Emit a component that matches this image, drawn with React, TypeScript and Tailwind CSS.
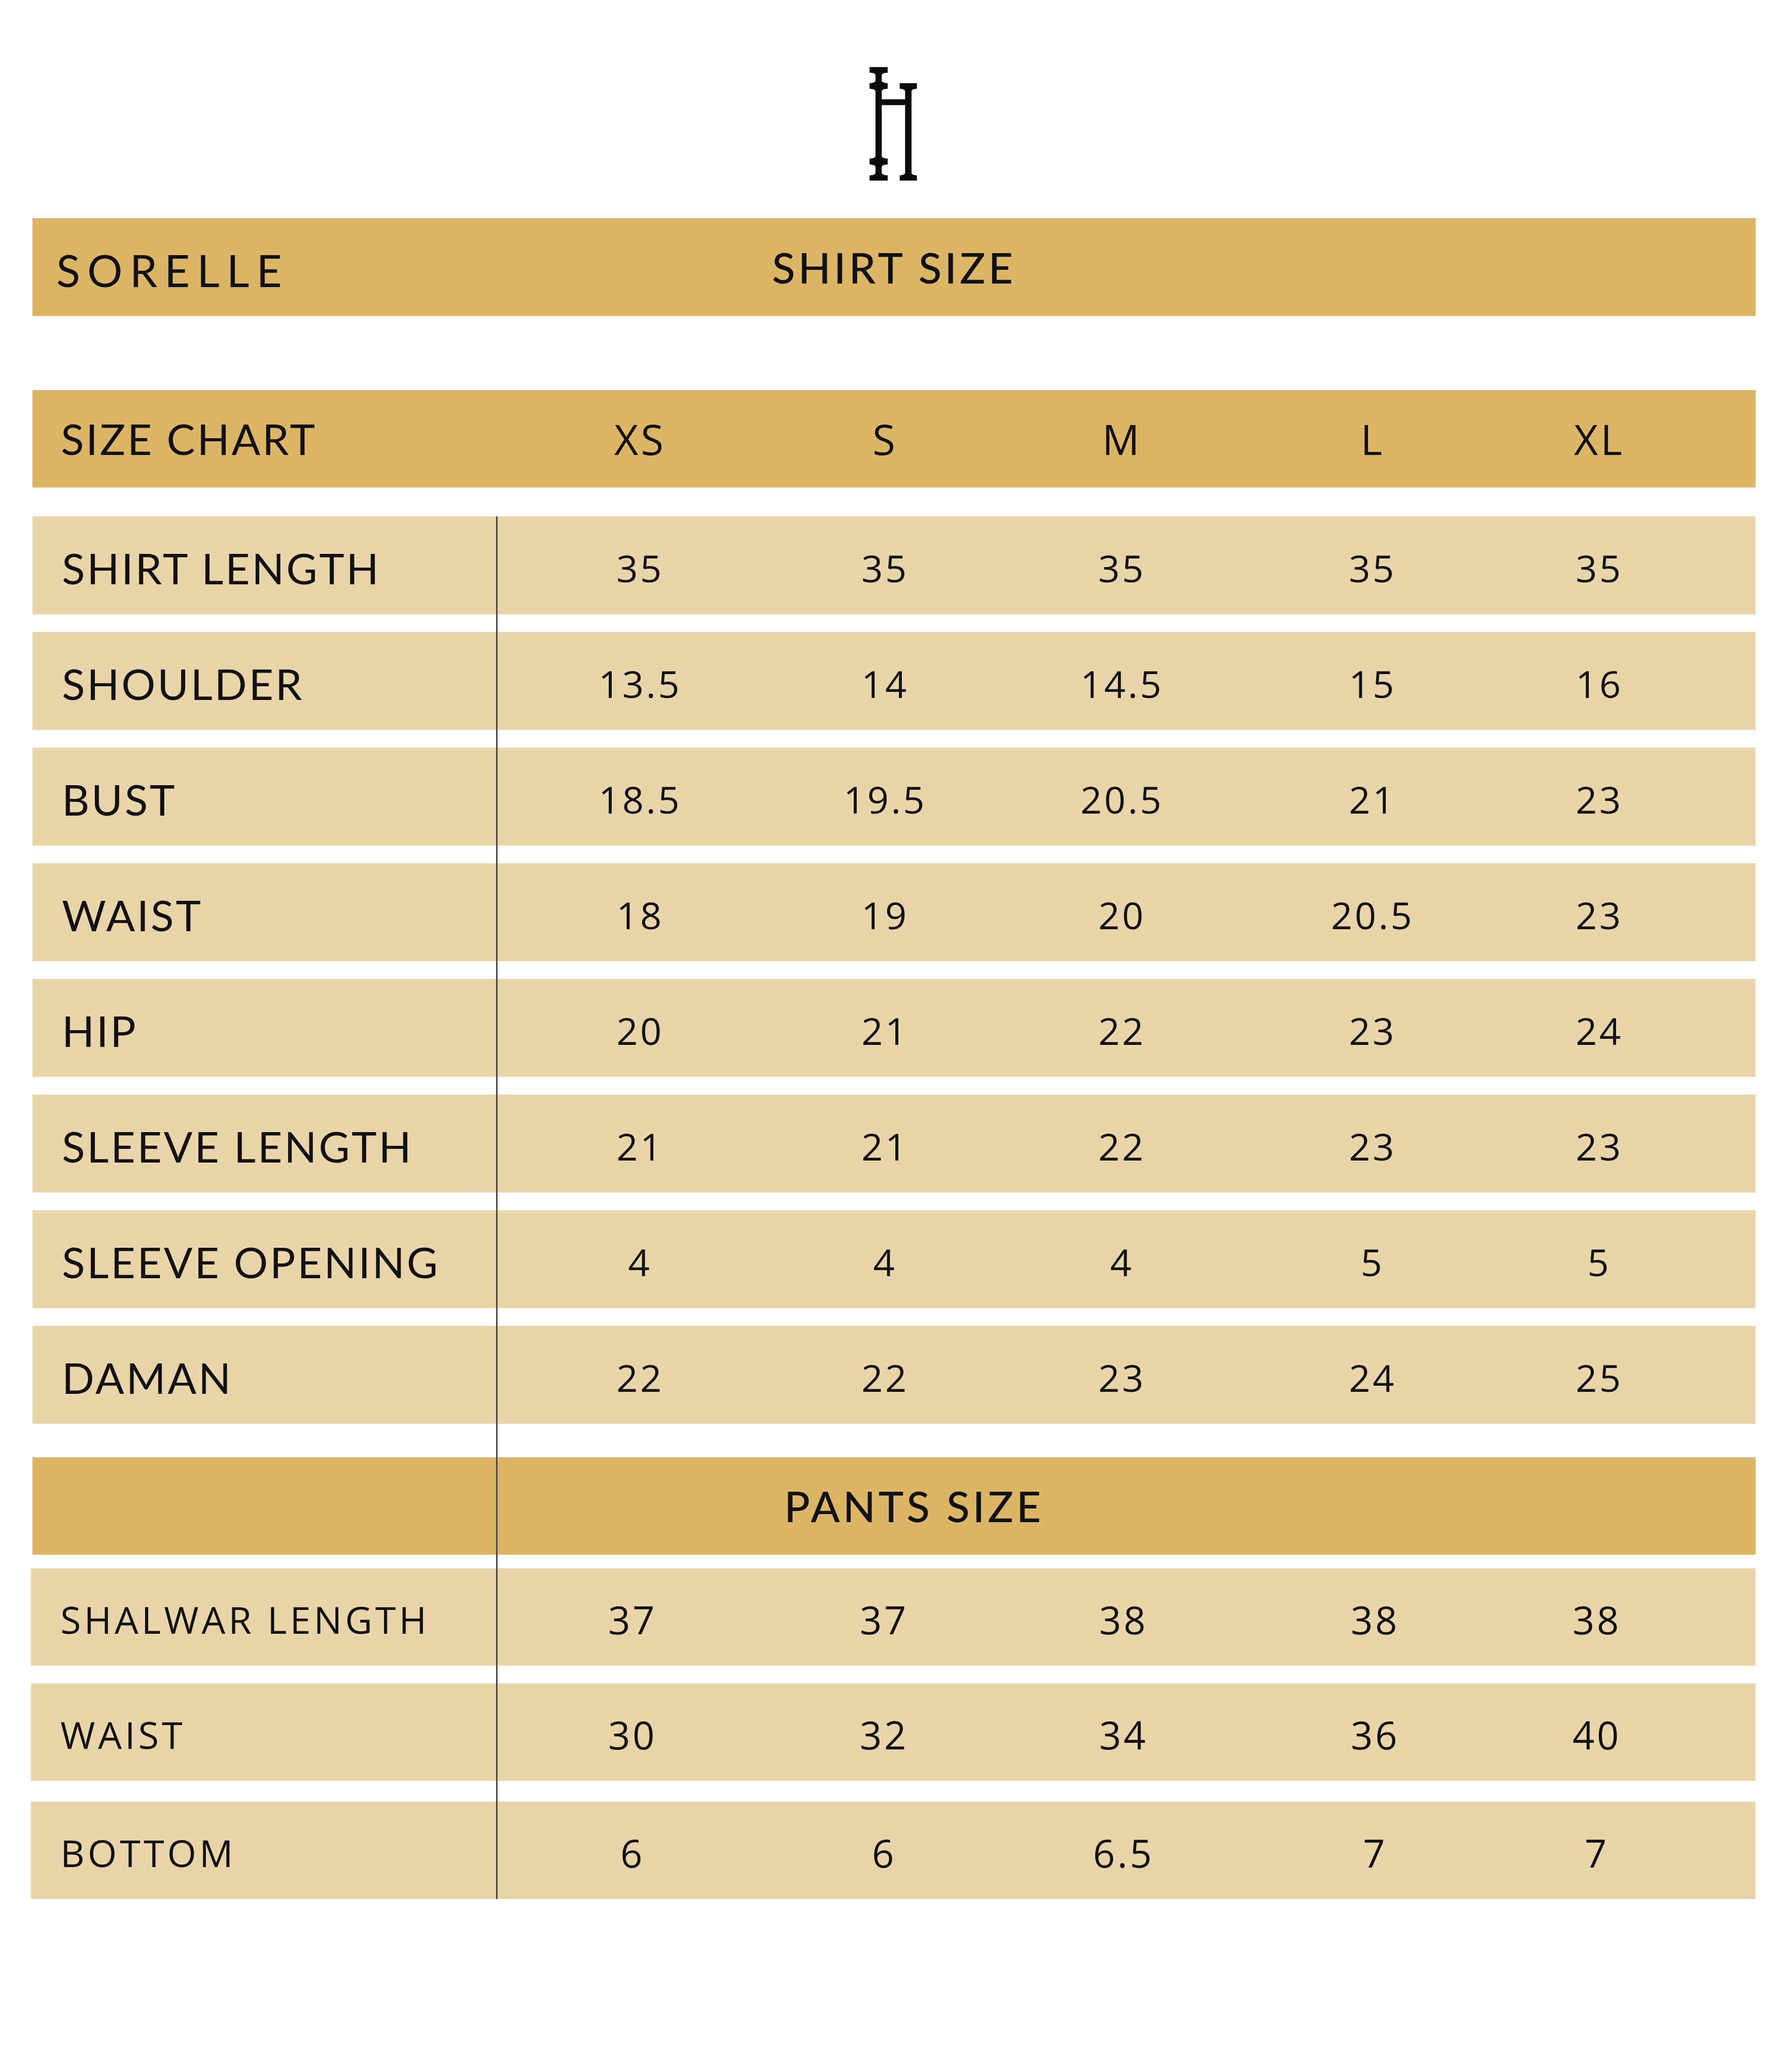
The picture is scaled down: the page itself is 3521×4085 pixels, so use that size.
const shirtRows: [string, string[]][] = [
  ['SHIRT LENGTH', ['35', '35', '35', '35', '35']],
  ['SHOULDER', ['13.5', '14', '14.5', '15', '16']],
  ['BUST', ['18.5', '19.5', '20.5', '21', '23']],
  ['WAIST', ['18', '19', '20', '20.5', '23']],
  ['HIP', ['20', '21', '22', '23', '24']],
  ['SLEEVE LENGTH', ['21', '21', '22', '23', '23']],
  ['SLEEVE OPENING', ['4', '4', '4', '5', '5']],
  ['DAMAN', ['22', '22', '23', '24', '25']],
];

const pantsRows: [string, string[], string][] = [
  ['SHALWAR LENGTH', ['37', '37', '38', '38', '38'], 'mt-[27px]'],
  ['WAIST', ['30', '32', '34', '36', '40'], 'mt-[35px]'],
  ['BOTTOM', ['6', '6', '6.5', '7', '7'], 'mt-[41px]'],
];

const sizes = ['XS', 'S', 'M', 'L', 'XL'];

const futura = "font-['Lato',sans-serif]";
const humanist = "font-['Open_Sans',sans-serif]";

function Logo() {
  return (
    <svg viewBox="330 150 300 690" className="w-[100px] h-[230px]" fill="#0b0b0b">
      <path d="M340,157 H447 V190 Q414,191 412,204 V238 Q414,251 447,252 V285 Q414,286 412,299 V347 H552 V382 H412 V684 Q414,697 447,698 V733 Q414,734 412,747 V784 Q414,796 447,797 V828 H340 V797 Q373,796 375,784 V747 Q373,734 340,733 V698 Q373,697 375,684 V299 Q373,286 340,285 V252 Q373,251 375,238 V204 Q373,191 340,190 Z" />
      <path d="M518,252 H620 V285 Q590,286 588,299 V784 Q590,796 620,797 V828 H518 V797 Q548,796 550,784 V299 Q548,286 518,285 Z" />
    </svg>
  );
}

export default function App() {
  return (
    <div className="min-h-[4085px] w-full bg-white text-[#111]">
      {/* Logo */}
      <div className="flex justify-center pt-[130px]">
        <Logo />
      </div>

      <div className="ml-[64px] w-[3397px] mt-[70px]">
        {/* Title band */}
        <div className="relative h-[193px] bg-[#ddb566] flex items-center">
          <span className={`${futura} pl-[47px] pt-[12px] text-[87px] leading-none tracking-[0.16em]`}>
            SORELLE
          </span>
          <span className={`${futura} absolute left-0 right-0 text-center font-medium text-[84px] leading-none tracking-[0.07em]`}>
            SHIRT SIZE
          </span>
        </div>

        {/* Size header */}
        <div className="mt-[146px] h-[192px] bg-[#ddb566] grid grid-cols-[915px_566px_400px_534px_454px_440px] items-center">
          <span className={`${futura} pl-[56px] text-[84px] leading-none tracking-[0.045em]`}>SIZE CHART</span>
          {sizes.map((s) => (
            <span key={s} className={`${humanist} text-center text-[82px] leading-none tracking-[0.06em]`}>
              {s}
            </span>
          ))}
        </div>

        <div className="relative mt-[57px]">
          {/* Shirt measurements */}
          <div className="flex flex-col gap-[35px]">
            {shirtRows.map(([label, values]) => (
              <div
                key={label}
                className="h-[193px] pt-[10px] bg-[#ead5ab] grid grid-cols-[915px_566px_400px_534px_454px_440px] items-center"
              >
                <span className={`${futura} pl-[58px] text-[84px] leading-none tracking-[0.045em]`}>{label}</span>
                {values.map((v, i) => (
                  <span key={i} className={`${humanist} text-center text-[74px] leading-none tracking-[0.06em]`}>
                    {v}
                  </span>
                ))}
              </div>
            ))}
          </div>

          {/* Pants header */}
          <div className="mt-[66px] h-[192px] bg-[#ddb566] flex items-center">
            <span className={`${futura} ml-[1482px] font-medium text-[84px] leading-none tracking-[0.07em]`}>
              PANTS SIZE
            </span>
          </div>

          {/* Pants measurements */}
          {pantsRows.map(([label, values, mt]) => (
            <div
              key={label}
              className={`${mt} -ml-[3px] h-[192px] pt-[10px] bg-[#ead5ab] grid grid-cols-[918px_536px_456px_488px_504px_370px] items-center`}
            >
              <span className={`${humanist} pl-[58px] text-[74px] leading-none tracking-[0.08em]`}>{label}</span>
              {values.map((v, i) => (
                <span key={i} className={`${humanist} text-center text-[76px] leading-none tracking-[0.06em]`}>
                  {v}
                </span>
              ))}
            </div>
          ))}

          {/* Column divider */}
          <div className="absolute left-[914px] top-0 bottom-0 w-[3px] bg-[#4a4a4a]" />
        </div>
      </div>
    </div>
  );
}
